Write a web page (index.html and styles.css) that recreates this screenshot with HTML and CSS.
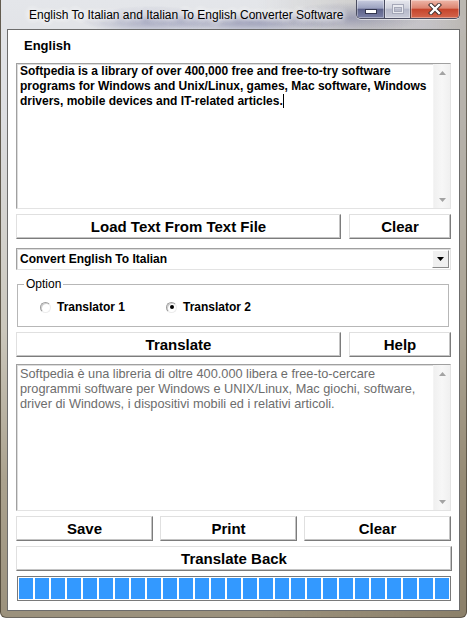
FILE: index.html
```html
<!DOCTYPE html>
<html>
<head>
<meta charset="utf-8">
<title>English To Italian and Italian To English Converter Software</title>
<link rel="stylesheet" href="styles.css">
</head>
<body>
<div class="window">
  <div class="titlebar">
    <span class="title">English To Italian and Italian To English Converter Software</span>
    <div class="caption">
      <div class="cap cap-min"><span class="min-ico"></span></div>
      <div class="cap cap-max"><span class="max-ico"></span></div>
      <div class="cap cap-close">
        <svg width="14" height="12" viewBox="0 0 14 12">
          <path d="M3 2 L11 10 M11 2 L3 10" stroke="#3a2a2a" stroke-width="4.2" stroke-linecap="square"/>
          <path d="M3 2 L11 10 M11 2 L3 10" stroke="#ffffff" stroke-width="2.4" stroke-linecap="square"/>
        </svg>
      </div>
    </div>
  </div>
  <div class="client">
    <div class="label">English</div>
    <div class="textbox src">
      <div class="tb-text">Softpedia is a library of over 400,000 free and free-to-try software programs for Windows and Unix/Linux, games, Mac software, Windows drivers, mobile devices and IT-related articles.<span class="caret"></span></div>
      <div class="vscroll">
        <div class="arrow"><svg width="7" height="4" viewBox="0 0 7 4"><path d="M0 4 L3.5 0 L7 4Z" fill="#a3a3a3"/></svg></div>
        <div class="arrow"><svg width="7" height="4" viewBox="0 0 7 4"><path d="M0 0 L7 0 L3.5 4Z" fill="#a3a3a3"/></svg></div>
      </div>
    </div>
    <div class="row row-a">
      <div class="btn btn-big">Load Text From Text File</div>
      <div class="btn btn-small">Clear</div>
    </div>
    <div class="combo">
      <span class="combo-text">Convert English To Italian</span>
      <span class="combo-btn"><svg width="7" height="4" viewBox="0 0 7 4"><path d="M0 0 L7 0 L3.5 4Z" fill="#000"/></svg></span>
    </div>
    <fieldset class="group">
      <legend>Option</legend>
      <div class="opts">
        <div class="opt"><span class="radio"></span><span>Translator 1</span></div>
        <div class="opt"><span class="radio checked"></span><span>Translator 2</span></div>
      </div>
    </fieldset>
    <div class="row row-b">
      <div class="btn btn-big">Translate</div>
      <div class="btn btn-small">Help</div>
    </div>
    <div class="textbox out">
      <div class="tb-text">Softpedia è una libreria di oltre 400.000 libera e free-to-cercare programmi software per Windows e UNIX/Linux, Mac giochi, software, driver di Windows, i dispositivi mobili ed i relativi articoli.</div>
      <div class="vscroll">
        <div class="arrow"><svg width="7" height="4" viewBox="0 0 7 4"><path d="M0 4 L3.5 0 L7 4Z" fill="#a3a3a3"/></svg></div>
        <div class="arrow"><svg width="7" height="4" viewBox="0 0 7 4"><path d="M0 0 L7 0 L3.5 4Z" fill="#a3a3a3"/></svg></div>
      </div>
    </div>
    <div class="row row-c">
      <div class="btn btn-third">Save</div>
      <div class="btn btn-third">Print</div>
      <div class="btn">Clear</div>
    </div>
    <div class="btn btn-wide">Translate Back</div>
    <div class="progress">
      <span></span><span></span><span></span><span></span><span></span><span></span><span></span><span></span><span></span>
      <span></span><span></span><span></span><span></span><span></span><span></span><span></span><span></span><span></span>
      <span></span><span></span><span></span><span></span><span></span><span></span><span></span><span></span><span></span>
    </div>
  </div>
</div>
</body>
</html>
```
FILE: styles.css
```css
* { box-sizing: border-box; }
html, body { margin: 0; padding: 0; }
body {
  width: 467px;
  height: 618px;
  overflow: hidden;
  font-family: "Liberation Sans", Arial, sans-serif;
}
.window {
  width: 467px;
  height: 618px;
  display: flex;
  flex-direction: column;
  border: 1px solid rgba(70, 62, 48, 0.75);
  border-top: none;
  border-radius: 0 0 6px 6px;
  background:
    radial-gradient(ellipse 70px 14px at 150px 20px, rgba(70, 74, 130, 0.45), transparent),
    radial-gradient(ellipse 90px 12px at 250px 22px, rgba(60, 64, 120, 0.45), transparent),
    radial-gradient(ellipse 70px 16px at 350px 18px, rgba(80, 84, 135, 0.4), transparent),
    radial-gradient(ellipse 50px 20px at 420px 25px, rgba(200, 200, 215, 0.5), transparent),
    linear-gradient(90deg, rgba(255,255,255,0) 55%, rgba(110, 96, 70, 0.35) 100%),
    linear-gradient(180deg, #e4e6ea 0px, #dcdde0 120px, #cbc7bc 330px, #aba28e 480px, #9b917c 618px);
}
.titlebar {
  height: 29px;
  flex: none;
  display: flex;
  justify-content: space-between;
  align-items: flex-start;
  padding: 0 6px 0 28px;
}
.title {
  font-size: 12px;
  line-height: 14px;
  margin-top: 8px;
  color: #000;
  text-shadow: 0 0 6px #fff, 0 0 6px #fff, 0 0 10px #fff;
  white-space: nowrap;
}
.caption {
  display: flex;
  height: 19px;
  border: 1px solid #4a4c60;
  border-top: none;
  border-radius: 0 0 5px 5px;
  overflow: hidden;
  box-shadow: 0 1px 0 rgba(255, 255, 255, 0.6);
}
.cap {
  height: 100%;
  display: flex;
  align-items: center;
  justify-content: center;
  box-shadow: inset 0 0 0 1px rgba(255, 255, 255, 0.35);
}
.cap-min {
  width: 28px;
  border-right: 1px solid #4a4c60;
  background: linear-gradient(180deg, #c9cde0 0%, #9ca2c0 45%, #5d6289 52%, #7b80a6 100%);
}
.cap-max {
  width: 26px;
  border-right: 1px solid #5a4040;
  background: linear-gradient(180deg, #e6e7ee 0%, #cfd1dc 45%, #b5b8c9 52%, #c9cbd8 100%);
}
.cap-close {
  width: 48px;
  background: linear-gradient(180deg, #eeb7a9 0%, #dc8571 45%, #c6452c 52%, #d4664d 100%);
}
.min-ico {
  width: 10px;
  height: 3px;
  margin-top: 4px;
  background: #fff;
  box-shadow: 0 0 0 1px #33364f;
}
.max-ico {
  width: 10px;
  height: 8px;
  border: 1px solid #e9eaf0;
  border-top-width: 2px;
  box-shadow: 0 0 0 1px #a5a8b8, inset 0 0 0 1px #a5a8b8;
}

.client {
  flex: 1;
  margin: 0 6px 6px 6px;
  background: #fff;
  border: 1px solid #6c6c6c;
  padding: 0 8px;
  display: flex;
  flex-direction: column;
}
.label {
  font-size: 13px;
  font-weight: bold;
  line-height: 16px;
  padding: 8px 0 0 8px;
  margin-bottom: 9px;
  color: #000;
}
.textbox {
  display: flex;
  border: 1px solid;
  border-color: #a0a0a0 #e3e3e3 #e3e3e3 #a0a0a0;
  box-shadow: inset 1px 1px 0 #dcdcdc;
  background: #fff;
}
.textbox.src { height: 146px; }
.textbox.out { height: 147px; margin-top: 7px; }
.tb-text {
  flex: 1;
  padding: 0 0 0 3px;
  font-size: 12px;
  line-height: 15px;
  font-weight: bold;
  color: #000;
}
.out .tb-text {
  font-weight: normal;
  font-size: 12.75px;
  color: #6d6d6d;
  padding-top: 1px;
}
.caret {
  display: inline-block;
  width: 1px;
  height: 14px;
  background: #000;
  vertical-align: -3px;
}
.vscroll {
  width: 17px;
  flex: none;
  display: flex;
  flex-direction: column;
  justify-content: space-between;
  background: linear-gradient(90deg, #f0f0f0, #f7f7f7 50%, #f0f0f0);
  border-left: 1px solid #f4f4f4;
}
.arrow {
  height: 17px;
  display: flex;
  align-items: center;
  justify-content: center;
}
.row {
  display: flex;
  gap: 8px;
  height: 25px;
  margin-top: 5px;
}
.btn {
  flex: 1;
  height: 25px;
  display: flex;
  align-items: center;
  justify-content: center;
  background: #fff;
  border: 1px solid;
  border-color: #e0e0e0 #7c7c7c #7c7c7c #e0e0e0;
  box-shadow: inset -1px -1px 0 #c4c4c4;
  font-size: 15px;
  font-weight: bold;
  color: #000;
}
.btn-big { flex: none; width: 325px; }
.btn-small { flex: none; width: 102px; }
.row-c { gap: 7px; }
.btn-third { flex: none; width: 137px; }
.btn-wide { flex: none; margin-top: 5px; width: 436px; }
.combo {
  margin-top: 9px;
  height: 22px;
  display: flex;
  align-items: stretch;
  border: 1px solid;
  border-color: #a0a0a0 #e3e3e3 #e3e3e3 #a0a0a0;
  box-shadow: inset 1px 1px 0 #dcdcdc;
}
.combo-text {
  flex: 1;
  font-size: 12px;
  font-weight: bold;
  line-height: 20px;
  padding-left: 3px;
  color: #000;
}
.combo-btn {
  width: 17px;
  margin: 1px 1px 1px 0;
  display: flex;
  align-items: center;
  justify-content: center;
  background: #f0f0f0;
  border: 1px solid;
  border-color: #fff #8a8a8a #8a8a8a #fff;
}
.group {
  margin: 7px 2px 0 1px;
  padding: 0;
  height: 50px;
  border: 1px solid #b7b7b7;
  box-shadow: inset 1px 1px 0 #fff;
  min-width: 0;
}
.group legend {
  margin-left: 6px;
  padding: 0 2px;
  font-size: 12px;
  line-height: 14px;
  color: #000;
}
.opts {
  display: flex;
  padding: 8px 0 0 22px;
}
.opt {
  width: 126px;
  display: flex;
  align-items: center;
  gap: 6px;
  font-size: 12px;
  font-weight: bold;
  line-height: 16px;
  color: #000;
}
.radio {
  width: 11px;
  height: 11px;
  border-radius: 50%;
  border: 1px solid;
  border-color: #9c9c9c #ececec #ececec #9c9c9c;
  background: #fff;
  box-shadow: inset 1px 1px 0 #d0d0d0;
  display: flex;
  align-items: center;
  justify-content: center;
}
.radio.checked::after {
  content: "";
  width: 4px;
  height: 4px;
  border-radius: 50%;
  background: #000;
}
.progress {
  margin-top: 5px;
  height: 25px;
  border: 1px solid #7a7a7a;
  padding: 1px;
  display: flex;
  gap: 2px;
  width: 434px;
  margin-left: 1px;
}
.progress span {
  width: 14px;
  flex: none;
  background: #3399ff;
}
```
